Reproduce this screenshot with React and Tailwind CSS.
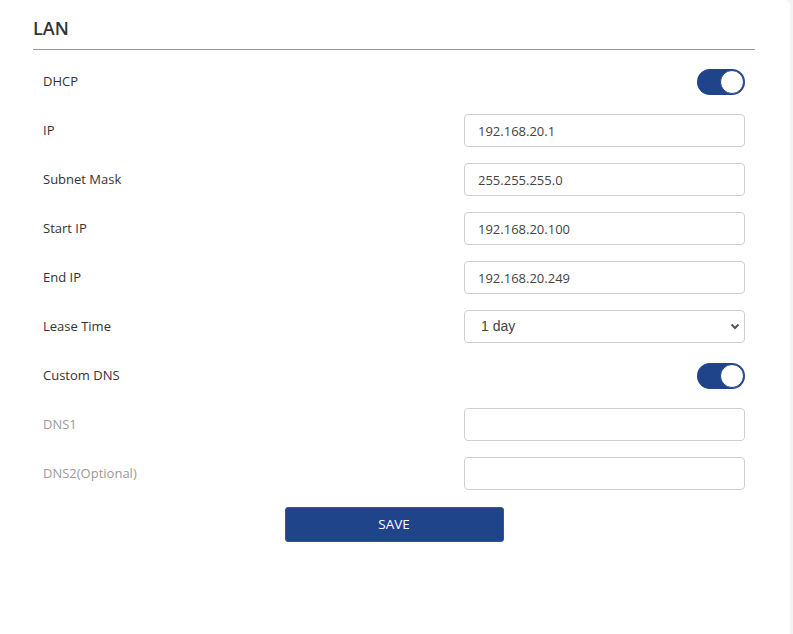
import React from "react";

const font = { fontFamily: '"Open Sans", "Noto Sans", sans-serif' };

function Toggle() {
  return (
    <div className="relative h-[26px] w-[48px] rounded-full bg-[#1f4489]">
      <div className="absolute right-[1px] top-[1px] h-[24px] w-[24px] rounded-full border border-[#1f4489] bg-white" />
    </div>
  );
}

function TextField({ value }) {
  return (
    <input
      type="text"
      defaultValue={value}
      className="h-[33px] w-[281px] rounded-[4px] border border-[#cfcfcf] bg-white px-[13px] text-[13px] text-[#444] outline-none"
      style={font}
    />
  );
}

function LeaseSelect() {
  return (
    <div className="relative h-[33px] w-[281px]">
      <select
        defaultValue="1 day"
        className="h-full w-full appearance-none rounded-[4px] border border-[#cfcfcf] bg-white pl-[16px] text-[14px] text-[#444] outline-none"
        style={{ fontFamily: '"Liberation Sans", Arial, sans-serif' }}
      >
        <option>1 day</option>
        <option>12 hours</option>
        <option>1 week</option>
      </select>
      <svg
        className="pointer-events-none absolute right-[5px] top-[13px]"
        width="10"
        height="7"
        viewBox="0 0 10 7"
      >
        <path d="M1.5 1.5 L5 5 L8.5 1.5" fill="none" stroke="#555" strokeWidth="2" />
      </svg>
    </div>
  );
}

function Row({ label, muted, children }) {
  return (
    <div className="flex h-[33px] items-center justify-between px-[10px]">
      <span className={`text-[13px] ${muted ? "text-[#9a9a9a]" : "text-[#333]"}`}>{label}</span>
      {children}
    </div>
  );
}

export default function App() {
  return (
    <div className="flex h-[634px] w-[793px] bg-[#f4f4f4]" style={font}>
      <div className="h-full w-[790px] rounded-tr-[5px] bg-white pl-[33px] pr-[35px]">
        <div className="border-b border-[#999] pb-[9px] pt-[16px]">
          <h2 className="text-[18px] font-semibold leading-[24px] text-[#333]">LAN</h2>
        </div>
        <div className="mt-[15px] flex flex-col gap-[16px]">
          <Row label="DHCP">
            <Toggle />
          </Row>
          <Row label="IP">
            <TextField value="192.168.20.1" />
          </Row>
          <Row label="Subnet Mask">
            <TextField value="255.255.255.0" />
          </Row>
          <Row label="Start IP">
            <TextField value="192.168.20.100" />
          </Row>
          <Row label="End IP">
            <TextField value="192.168.20.249" />
          </Row>
          <Row label="Lease Time">
            <LeaseSelect />
          </Row>
          <Row label="Custom DNS">
            <Toggle />
          </Row>
          <Row label="DNS1" muted>
            <TextField value="" />
          </Row>
          <Row label="DNS2(Optional)" muted>
            <TextField value="" />
          </Row>
        </div>
        <div className="mt-[17px] flex justify-center">
          <button className="h-[35px] w-[219px] rounded-[3px] border border-[#2a5aa0] bg-[#1f4489] text-[13.5px] text-white">
            SAVE
          </button>
        </div>
      </div>
    </div>
  );
}
